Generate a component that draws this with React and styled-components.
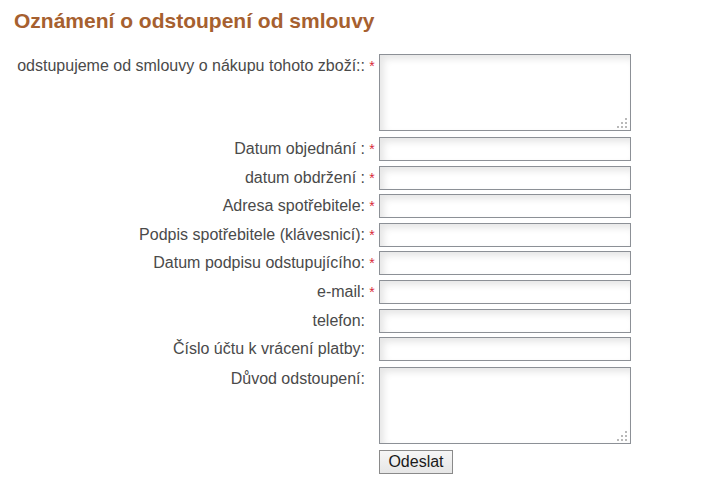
import React from "react";
import styled, { createGlobalStyle } from "styled-components";

const GlobalStyle = createGlobalStyle`
  body {
    margin: 0;
    background: #ffffff;
    font-family: "Liberation Sans", Arial, sans-serif;
  }
`;

const fields = [
  { label: "odstupujeme od smlouvy o nákupu tohoto zboží::", required: true, area: true },
  { label: "Datum objednání :", required: true },
  { label: "datum obdržení :", required: true },
  { label: "Adresa spotřebitele:", required: true },
  { label: "Podpis spotřebitele (klávesnicí):", required: true },
  { label: "Datum podpisu odstupujícího:", required: true },
  { label: "e-mail:", required: true },
  { label: "telefon:" },
  { label: "Číslo účtu k vrácení platby:" },
  { label: "Důvod odstoupení:", area: true },
];

const Grip = () => (
  <GripIcon width="12" height="12" viewBox="0 0 12 12">
    {[
      [9, 1],
      [5, 5],
      [9, 5],
      [1, 9],
      [5, 9],
      [9, 9],
    ].map(([x, y]) => (
      <rect key={`${x}-${y}`} x={x} y={y} width="2" height="2" fill="#b9b9b9" />
    ))}
  </GripIcon>
);

const App = () => {
  return (
    <Page>
      <GlobalStyle />
      <Title>Oznámení o odstoupení od smlouvy</Title>
      <Form onSubmit={(e) => e.preventDefault()}>
        {fields.map((f, i) => (
          <Row key={f.label} $area={f.area} $first={i === 0}>
            <Label>{f.label}</Label>
            <Star>{f.required ? "*" : ""}</Star>
            {f.area ? (
              <AreaWrap>
                <TextArea />
                <Grip />
              </AreaWrap>
            ) : (
              <Input type="text" />
            )}
          </Row>
        ))}
        <Row>
          <Label />
          <Star />
          <Button type="submit">Odeslat</Button>
        </Row>
      </Form>
    </Page>
  );
};

const Page = styled.div`
  padding: 9px 0 0 14px;
`;

const Title = styled.h2`
  margin: 0 0 21px 0;
  font-size: 21px;
  line-height: 24px;
  font-weight: bold;
  color: #a6602f;
`;

const Form = styled.form`
  display: flex;
  flex-direction: column;
  gap: 4.6px;
`;

const Row = styled.div`
  display: flex;
  align-items: flex-start;
  margin-top: ${(p) => (p.$area && !p.$first ? "1.4px" : "0")};
  margin-bottom: ${(p) => (p.$area ? "1.4px" : "0")};
`;

const Label = styled.label`
  width: 351px;
  text-align: right;
  font-size: 16px;
  line-height: 24px;
  color: #4a4a4a;
  white-space: nowrap;
`;

const Star = styled.span`
  width: 14px;
  text-align: center;
  color: #d9293a;
  font-size: 14px;
  line-height: 24px;
`;

const fieldStyle = `
  box-sizing: border-box;
  width: 252px;
  margin: 0;
  border: 1px solid #8c9096;
  border-radius: 0;
  background: #ffffff;
  box-shadow: inset 4px 4px 7px rgba(0, 0, 0, 0.1);
  font-family: "Liberation Sans", Arial, sans-serif;
  font-size: 14px;
  outline: none;
`;

const Input = styled.input`
  ${fieldStyle}
  height: 24px;
  padding: 2px 4px;
`;

const AreaWrap = styled.div`
  position: relative;
  width: 252px;
  height: 77px;
`;

const TextArea = styled.textarea`
  ${fieldStyle}
  display: block;
  height: 77px;
  padding: 3px 4px;
  resize: none;
`;

const GripIcon = styled.svg`
  position: absolute;
  right: 3px;
  bottom: 2px;
`;

const Button = styled.button`
  box-sizing: border-box;
  width: 74px;
  height: 24px;
  margin: 0;
  padding: 0;
  border: 1px solid #8a8a8a;
  border-radius: 0;
  background: linear-gradient(#f6f6f6, #e6e6e6);
  font-family: "Liberation Sans", Arial, sans-serif;
  font-size: 16px;
  color: #1a1a1a;
`;

export default App;
